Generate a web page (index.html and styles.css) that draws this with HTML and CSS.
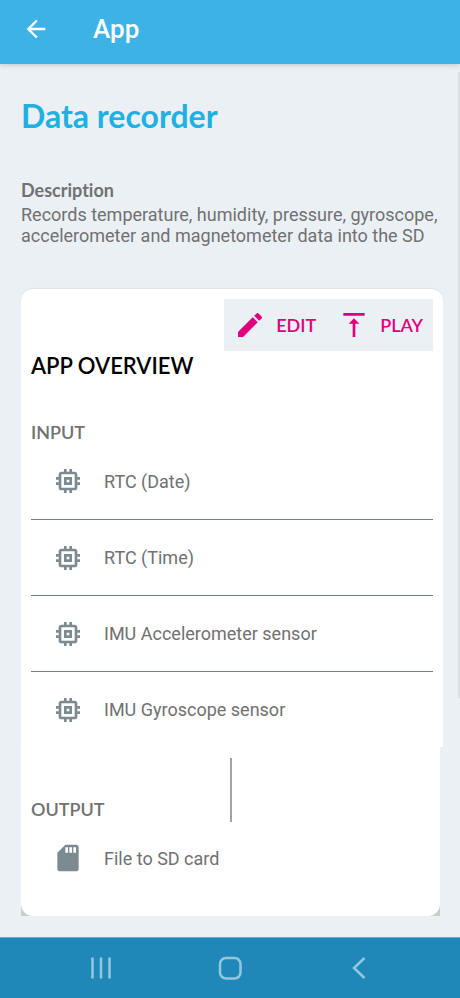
FILE: index.html
```html
<!DOCTYPE html>
<html lang="en">
<head>
<meta charset="utf-8">
<meta name="viewport" content="width=device-width, initial-scale=1">
<title>Data recorder</title>
<link rel="stylesheet" href="styles.css">
</head>
<body>
<svg class="symbols" aria-hidden="true">
  <symbol id="chip" viewBox="0 0 24 24"><path fill-rule="evenodd" d="M15 9H9v6h6V9zm-2 4h-2v-2h2v2zm8-2V9h-2V7c0-1.100-.9-2-2-2h-2V3h-2v2h-2V3H9v2H7c-1.100 0-2 .9-2 2v2H3v2h2v2H3v2h2v2c0 1.100.9 2 2 2h2v2h2v-2h2v2h2v-2h2c1.100 0 2-.9 2-2v-2h2v-2h-2v-2h2zm-4 6H7V7h10v10z"/></symbol>
</svg>
<header class="topbar">
  <button class="back" type="button" aria-label="Back">
    <svg viewBox="0 0 24 24"><path d="M20 11H7.830l5.590-5.590L12 4l-8 8 8 8 1.410-1.410L7.830 13H20v-2z"/></svg>
  </button>
  <span class="topbar-title">App</span>
</header>
<main class="content">
  <h1 class="title">Data recorder</h1>
  <h2 class="label">Description</h2>
  <p class="description">Records temperature, humidity, pressure, gyroscope, accelerometer and magnetometer data into the SD</p>
  <section class="panel panel-input">
    <div class="toolbar">
      <button class="action" type="button">
        <svg viewBox="0 0 24 24"><path d="M3 17.250V21h3.750L17.810 9.940l-3.750-3.750L3 17.250zM20.710 7.040c.39-.39.39-1.020 0-1.410l-2.340-2.340c-.39-.39-1.020-.39-1.410 0l-1.830 1.830 3.750 3.750 1.830-1.830z"/></svg>
        <span>EDIT</span>
      </button>
      <button class="action" type="button">
        <svg viewBox="0 0 24 24"><path d="M8 11h3v10h2V11h3l-4-4-4 4zM4 3v2h16V3H4z"/></svg>
        <span>PLAY</span>
      </button>
    </div>
    <h2 class="overview">APP OVERVIEW</h2>
    <h3 class="group">INPUT</h3>
    <ul class="list">
      <li class="row"><svg class="row-icon" viewBox="0 0 24 24"><use href="#chip"/></svg><span>RTC (Date)</span></li>
      <li class="row"><svg class="row-icon" viewBox="0 0 24 24"><use href="#chip"/></svg><span>RTC (Time)</span></li>
      <li class="row"><svg class="row-icon" viewBox="0 0 24 24"><use href="#chip"/></svg><span>IMU Accelerometer sensor</span></li>
      <li class="row"><svg class="row-icon" viewBox="0 0 24 24"><use href="#chip"/></svg><span>IMU Gyroscope sensor</span></li>
    </ul>
  </section>
  <div class="output-frame">
    <section class="panel panel-output">
      <div class="connector"></div>
      <h3 class="group">OUTPUT</h3>
      <ul class="list">
        <li class="row"><svg class="row-icon" viewBox="0 0 24 24"><path d="M18 2h-8L4.020 8 4 20c0 1.100.9 2 2 2h12c1.100 0 2-.9 2-2V4c0-1.100-.9-2-2-2zm-6 6h-2V4h2v4zm3 0h-2V4h2v4zm3 0h-2V4h2v4z"/></svg><span>File to SD card</span></li>
      </ul>
    </section>
  </div>
  <div class="scroll-thumb"></div>
</main>
<nav class="navbar" aria-label="System">
  <button type="button" aria-label="Recent apps"><svg viewBox="0 0 28 28"><path d="M5.500 3.500v21M14 3.500v21M22.500 3.500v21"/></svg></button>
  <button type="button" aria-label="Home"><svg viewBox="0 0 28 28"><rect x="4" y="4" width="20.500" height="20.500" rx="6"/></svg></button>
  <button type="button" aria-label="Back"><svg viewBox="0 0 28 28"><path d="M19.500 4 9 14l10.500 10"/></svg></button>
</nav>
</body>
</html>
```
FILE: styles.css
```css
* {
  box-sizing: border-box;
}

body {
  margin: 0;
  min-height: 100vh;
  display: flex;
  flex-direction: column;
  background: #ebf0f4;
  color: #707172;
  font-family: Roboto, sans-serif;
  font-size: 18px;
}

h1, h2, h3, p, ul {
  margin: 0;
  padding: 0;
}

button {
  border: 0;
  padding: 0;
  background: none;
  color: inherit;
  font: inherit;
}

svg {
  display: block;
  fill: currentColor;
}

.symbols {
  position: absolute;
  width: 0;
  height: 0;
}

.topbar {
  display: flex;
  align-items: center;
  gap: 43px;
  height: 64px;
  padding: 0 22px 7px;
  background: #3db2e6;
  color: #fff;
  box-shadow: 0 1px 5px rgba(60, 70, 90, 0.25);
}

.back svg {
  width: 28px;
  height: 28px;
}

.topbar-title {
  font-size: 26px;
  font-weight: 500;
}

.content {
  position: relative;
  flex: 1;
  padding: 32px 17px 21px 21px;
}

.title {
  color: #20b0e2;
  font: 700 32px/40px Lato, sans-serif;
}

.label {
  margin-top: 42px;
  font: 700 18px/24px Lato, sans-serif;
  font-variant-ligatures: none;
}

.description {
  margin: 2px 0 43px;
  line-height: 21px;
}

.panel {
  background: #fff;
}

.panel-input {
  padding: 10px 10px 0;
  border-radius: 12px 12px 0 0;
  box-shadow: 0 -1px 1px rgba(60, 70, 80, 0.08);
}

.toolbar {
  display: flex;
  gap: 22px;
  width: fit-content;
  height: 52px;
  margin-left: auto;
  padding: 0 10px;
  background: #ebf0f4;
}

.action {
  display: flex;
  align-items: center;
  gap: 10px;
  color: #df007d;
  font: 600 18px/24px Lato, sans-serif;
}

.action svg {
  width: 32px;
  height: 32px;
}

.overview {
  color: #000;
  font: 600 22px/30px Lato, sans-serif;
}

.group {
  font: 600 18px/22px Lato, sans-serif;
}

.panel-input .group {
  margin-top: 40px;
}

.list {
  list-style: none;
}

.row {
  display: flex;
  align-items: center;
  gap: 20px;
  height: 76px;
  padding-left: 21px;
}

.row + .row {
  border-top: 1px solid #747f85;
}

.row-icon {
  width: 32px;
  height: 32px;
  color: #7c8a91;
}

.output-frame {
  margin: -2px 3px 0 0;
  background: linear-gradient(#fff 50%, #c9cecd 50%);
}

.panel-output {
  padding: 13px 10px 20px;
  border-radius: 0 0 12px 12px;
}

.connector {
  width: 2px;
  height: 64px;
  margin: 0 auto -24px;
  background: #a0a3a6;
}

.scroll-thumb {
  position: absolute;
  top: 8px;
  right: 0;
  width: 2px;
  height: 82%;
  max-height: 626px;
  background: #dadfe2;
}

.navbar {
  display: flex;
  justify-content: center;
  gap: 101px;
  height: 61px;
  border-top: 1px solid #66aed0;
  background: #2088b8;
  color: #92c7df;
}

.navbar svg {
  width: 28px;
  height: 28px;
  fill: none;
  stroke: currentColor;
  stroke-width: 2.500;
}
```
